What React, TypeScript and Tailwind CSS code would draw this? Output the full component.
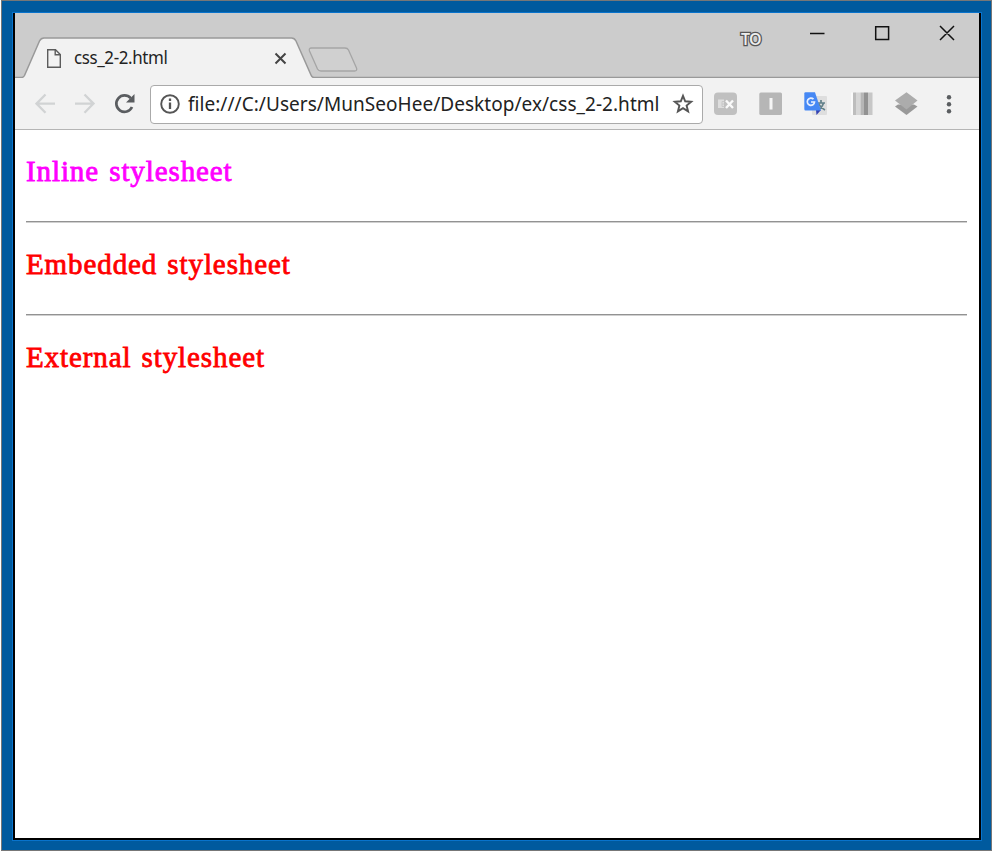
import React from 'react';

function TabShape() {
  return (
    <svg className="absolute inset-0" width="965" height="65" viewBox="15 13 965 65" fill="none">
      <path d="M15 77.5H21.5Q23.5 77.5 24.5 75.5L39.5 41Q41 38 44 38H291.5Q294.500 38 296 41L311 75Q312 77.500 314 77.500H980V79H15Z" fill="#f2f2f2" />
      <path d="M15 77.500H21.500Q23.500 77.500 24.500 75.500L39.500 41Q41 38 44 38H291.500Q294.500 38 296 41L311 75Q312 77.500 314 77.500H980" stroke="#999" strokeWidth="1.500" />
      <path d="M311.500 48H345Q347.500 48 348.500 50L356.500 68Q357.500 71 354.500 71H321Q318.500 71 317.500 69L309.500 51Q308.500 48 311.500 48Z" fill="#d0d0d0" stroke="#a5a5a5" strokeWidth="1.300" />
    </svg>
  );
}

function TabStrip() {
  return (
    <div className="relative h-[65px] shrink-0 bg-[#ccc]">
      <TabShape />
      <div className="relative flex h-full items-start">
        <svg className="ml-[31px] mt-[35px] shrink-0" width="16" height="21" viewBox="0 0 16 21" fill="none" stroke="#5c5c5c" strokeWidth="1.400">
          <path d="M1.700 1.700H9.500L14.300 6.500V19.300H1.700ZM9.200 1.700V6.800H14.300" />
        </svg>
        <span className="ml-[12px] mt-[32px] w-[190px] whitespace-nowrap font-['Noto_Sans',sans-serif] text-[18px] leading-6 tracking-[-0.400px] text-[#222]">
          <span className="inline-block origin-left scale-x-[0.940]">css_2-2.html</span>
        </span>
        <svg className="ml-[10px] mt-[39px] shrink-0" width="14" height="14" viewBox="0 0 14 14" stroke="#444" strokeWidth="2">
          <path d="M1.500 1.500L11.500 11.500M11.500 1.500L1.500 11.500" />
        </svg>
        <svg className="ml-[450px] mt-[15px] shrink-0" width="26" height="22" viewBox="0 0 26 22">
          <text x="3" y="16.500" fontFamily="Open Sans, sans-serif" fontSize="16" fontWeight="600" letterSpacing="-1" fill="#eee" stroke="#565656" strokeWidth="2.600" paintOrder="stroke">TO</text>
        </svg>
        <svg className="ml-[45px] mt-[10px] shrink-0" width="147" height="22" viewBox="809 23 147 22" fill="none" stroke="#111" strokeWidth="1.500">
          <path d="M810 33.600H824.500M875.700 26.700H888.600V39.600H875.700ZM940 26L954 40M954 26L940 40" />
        </svg>
      </div>
    </div>
  );
}

function NavIcons() {
  return (
    <svg width="101" height="24" viewBox="35 92 101 24" fill="none" className="ml-[20px] shrink-0">
      <g stroke="#d1d3d4" strokeWidth="2.300">
        <path d="M55 103.600H37M45.500 94.500L36.500 103.600L45.500 112.700" />
        <path d="M75 103.600H93M84.500 94.500L93.500 103.600L84.500 112.700" />
      </g>
      <path d="M130.700 98.200A8.200 8.200 0 1 0 132 107" stroke="#5a5d60" strokeWidth="2.700" />
      <path d="M134.500 94V102.600H126Z" fill="#5a5d60" />
    </svg>
  );
}

function Extensions() {
  return (
    <svg width="244" height="28" viewBox="712 90 244 28" className="ml-[9px] shrink-0">
      <rect x="714" y="92.500" width="23" height="22.500" rx="4" fill="#c0c0c0" />
      <rect x="718" y="99.500" width="6" height="8.500" fill="#dedede" />
      <path d="M724 101.500H722V106.500H724M722 104H724" stroke="#c8c8c8" fill="none" />
      <path d="M726 100.500L733 108M733 100.500L726 108" stroke="#fafafa" strokeWidth="2.400" />
      <rect x="759.300" y="92.500" width="22.700" height="22.500" rx="1.500" fill="#b6b6b6" />
      <rect x="769.500" y="98" width="3" height="11.500" fill="#f5f5f5" />
      <rect x="812" y="96" width="15" height="19" rx="1" fill="#dedede" />
      <path d="M817 103H825M821 100V103M823.500 103Q822 108 817.500 110M818.500 104Q821 108 825 110" stroke="#62818a" strokeWidth="1.700" fill="none" />
      <path d="M816 110H821L816.500 115Z" fill="#3541b0" />
      <path d="M805.500 92.300H815L821 110.500H805.500Q804.300 110.500 804.300 109V93.500Q804.300 92.300 805.500 92.300Z" fill="#4688f4" />
      <path d="M813.500 99.200A3.600 3.600 0 1 0 814.500 102H811" stroke="#e7efff" strokeWidth="1.700" fill="none" />
      <path d="M851 92.500H854V115H851Z" fill="#fafafa" />
      <path d="M853 92.500H856V115H853Z" fill="#bdbdbd" />
      <path d="M856 92.500H860.500V115H856Z" fill="#d6d6d6" />
      <path d="M860.500 92.500H864V115H860.500Z" fill="#b6b6b6" />
      <path d="M864 92.500H868V115H864Z" fill="#929292" />
      <path d="M868 92.500H872.500V115H868Z" fill="#c7c7c7" />
      <path d="M895 106.500L898 104.500H914L917.500 106.500L906.500 115Z" fill="#999" />
      <path d="M906.500 92.300L917.500 100.500L906.500 109.500L895 100.500Z" fill="#acacac" />
      <g fill="#5a5d60"><circle cx="949" cy="97.200" r="2.200" /><circle cx="949" cy="104.200" r="2.200" /><circle cx="949" cy="111.300" r="2.200" /></g>
    </svg>
  );
}

function Toolbar() {
  return (
    <div className="flex h-[52px] shrink-0 items-center border-b border-[#b5b5b5] bg-[#f2f2f2] pt-px">
      <NavIcons />
      <div className="ml-[14px] flex h-[39px] w-[553px] shrink-0 items-center rounded-[4px] border-[1.500px] border-[#aaa] bg-white">
        <svg width="22" height="22" viewBox="0 0 22 22" className="ml-[8px] shrink-0" fill="none" stroke="#555">
          <circle cx="11" cy="11" r="8.800" strokeWidth="1.900" />
          <path d="M11 9.500V16M11 5.500V8" strokeWidth="2.300" />
        </svg>
        <span className="ml-[7px] flex h-[30px] w-[477px] items-center whitespace-nowrap font-['Noto_Sans',sans-serif] text-[19px] leading-7 tracking-[0.040px] text-[#222]">
          <span>file:///C:/Users/MunSeoHee/Desktop/ex/css_2-2.html</span>
        </span>
        <svg width="22" height="22" viewBox="0 0 22 22" className="ml-[7px] shrink-0" fill="none" stroke="#555" strokeWidth="1.900">
          <path d="M11 2.800L13.200 8.300L19.200 8.700L14.600 12.600L16.100 18.400L11 15.200L5.900 18.400L7.400 12.600L2.800 8.700L8.800 8.300Z" />
        </svg>
      </div>
      <Extensions />
    </div>
  );
}

function Page() {
  const heading =
    "h-[36px] whitespace-nowrap font-['Liberation_Serif',serif] text-[29px] font-normal leading-9 tracking-[0.900px] [word-spacing:2px] [-webkit-text-stroke:0.800px_currentColor]";
  const rule = 'h-[2px] border-t border-[#929292] bg-[#d0d0d0]';
  return (
    <main className="flex-1 bg-white pl-[11px] pr-[12px] pt-[23px]">
      <h2 className={heading + ' text-[#f0f]'}>Inline stylesheet</h2>
      <div className={rule + ' mt-[32px]'} />
      <h2 className={heading + ' mt-[23px] text-[#f00]'}>Embedded stylesheet</h2>
      <div className={rule + ' mt-[32px]'} />
      <h2 className={heading + ' mt-[23px] text-[#f00]'}>External stylesheet</h2>
    </main>
  );
}

export default function App() {
  return (
    <div className="h-[852px] w-[992px] overflow-hidden bg-white pl-px">
      <div className="flex h-[851px] w-[991px] border border-[#777] bg-[#005a9e] pb-[9px] pl-[10px] pr-[9px] pt-[11px]">
        <div className="flex flex-1 border border-[#0873cc]">
          <div className="flex min-w-0 flex-1 flex-col overflow-hidden border-b-2 border-l-2 border-r-2 border-black">
            <TabStrip />
            <Toolbar />
            <Page />
          </div>
        </div>
      </div>
    </div>
  );
}
